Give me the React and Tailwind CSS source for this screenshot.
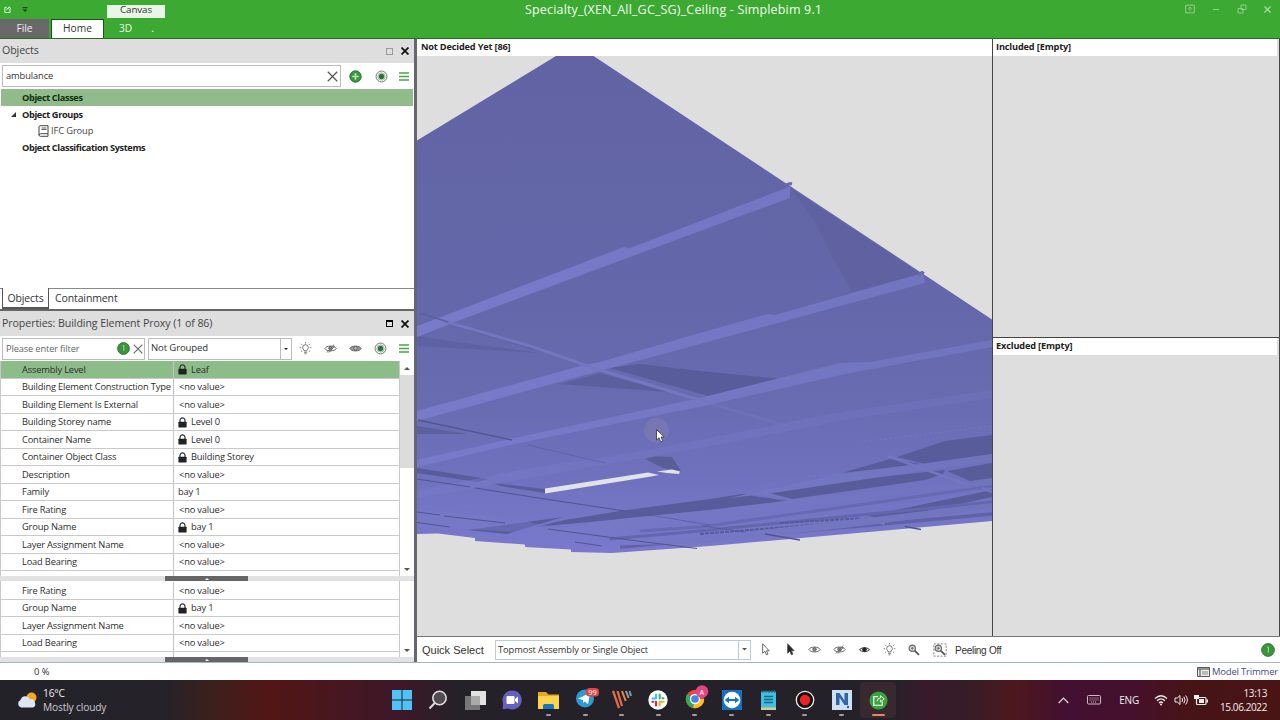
import React from 'react';

const UI = "font-['Open_Sans','Noto_Sans',sans-serif] whitespace-nowrap";

const ROWS = [
  ['Assembly Level', 'Leaf', true],
  ['Building Element Construction Type', '<no value>'],
  ['Building Element Is External', '<no value>'],
  ['Building Storey name', 'Level 0', true],
  ['Container Name', 'Level 0', true],
  ['Container Object Class', 'Building Storey', true],
  ['Description', '<no value>'],
  ['Family', 'bay 1'],
  ['Fire Rating', '<no value>'],
  ['Group Name', 'bay 1', true],
  ['Layer Assignment Name', '<no value>'],
  ['Load Bearing', '<no value>'],
];

function Svg({ s = 16, w, h, vb = '0 0 16 16', className = '', children }) {
  return (
    <svg width={w || s} height={h || s} viewBox={vb} className={'block shrink-0 ' + className} fill="none">
      {children}
    </svg>
  );
}

const Lock = () => (
  <Svg w={9} h={11} vb="0 0 9 11">
    <path d="M2 5V3.4a2.5 2.5 0 0 1 5 0V5" stroke="#333" strokeWidth="1.2" />
    <rect x="0.4" y="4.8" width="8.2" height="5.6" rx="0.4" fill="#222" />
  </Svg>
);
const Target = () => (
  <Svg s={13}>
    <circle cx="8" cy="8" r="6.7" stroke="#6d776d" strokeWidth="1.2" />
    <circle cx="8" cy="8" r="4.6" fill="#d5e3d5" stroke="#8d9a8d" strokeWidth=".7" />
    <circle cx="8" cy="8" r="3.3" fill="#2c7238" />
  </Svg>
);
const Menu = () => (
  <Svg w={10} h={9} vb="0 0 10 9">
    <path d="M0 1h10M0 4.5h10M0 8h10" stroke="#45a945" strokeWidth="1.3" />
  </Svg>
);
const Cross = ({ s = 10, c = '#444', sw = 1.1 }) => (
  <Svg s={s} vb="0 0 10 10">
    <path d="M.7.7l8.6 8.6M9.3.7L.7 9.3" stroke={c} strokeWidth={sw} />
  </Svg>
);
const Info = ({ s = 13 }) => (
  <Svg s={s}>
    <circle cx="8" cy="8" r="7.3" fill="#39943a" stroke="#287128" />
    <path d="M6.8 4.6h1.6v6.2M8.4 4v7" stroke="#9ed69e" strokeWidth="1.3" />
  </Svg>
);
const Bulb = () => (
  <Svg s={13}>
    <path d="M6.3 11V9.8C5 9 4.5 8 4.5 6.8a3.5 3.5 0 0 1 7 0C11.500 8 11 9 9.700 9.800V11z" stroke="#555" />
    <path d="M6.300 12.800h3.400M6.800 14.500h2.400M8 0v1.700M2.400 2.200l1.300 1.300M13.600 2.200l-1.300 1.300M.8 7h1.800M13.400 7h1.800M2.400 12l1.300-1.200M13.600 12l-1.300-1.200" stroke="#666" />
  </Svg>
);
const Eye = ({ slash, solid }) => (
  <Svg s={13}>
    <path d="M1 8c2-4 12-4 14 0-2 4-12 4-14 0z" stroke="#666" strokeWidth="1.2" fill={solid ? '#999' : 'none'} />
    <circle cx="8" cy="7.800" r="2.200" fill={solid ? '#bbb' : '#888'} stroke="#555" />
    {slash && <path d="M3.500 13L12.500 3M6 13l7-8" stroke="#666" strokeWidth="1.1" />}
  </Svg>
);
const SmallEye = () => (
  <Svg s={13}>
    <path d="M2 8c2-3 10-3 12 0-2 3.500-10 3.500-12 0z" stroke="#555" strokeWidth="1.300" />
    <circle cx="8" cy="8" r="2.800" fill="#222" />
  </Svg>
);
const Pointer = ({ fill }) => (
  <Svg s={13}>
    <path d="M4.500 1v11.500l2.800-2.300L9 14.500l2-.8-1.800-4.200h3.300z" fill={fill} stroke="#555" strokeWidth="1.100" />
  </Svg>
);
const Zoomer = ({ boxed }) => (
  <Svg s={14}>
    {boxed && <path d="M1 1h14v14H1z" stroke="#777" strokeDasharray="2.500 1.500" />}
    <circle cx="6" cy="6" r="3.600" stroke="#666" strokeWidth="1.300" fill="#ddd" />
    <path d="M6 4.300v3.400M4.300 6h3.400" stroke="#555" strokeWidth=".9" />
    <path d="M8.700 8.700l5 5" stroke="#555" strokeWidth="2" />
  </Svg>
);
const Tri = ({ up, s = 6, c = '#555' }) => (
  <Svg w={s} h={s / 2} vb="0 0 6 3">
    <path d={up ? 'M0 3L3 0l3 3z' : 'M0 0h6L3 3z'} fill={c} />
  </Svg>
);

function Row({ row, selected }) {
  return (
    <div className={'flex h-[17.53px] shrink-0 border-b border-[#c9c9c9] pt-px text-[9.300px] tracking-[-0.17px] text-[#2d2d2d] ' + (selected ? 'bg-[#8cbd88]' : 'bg-white')}>
      <div className="-mt-px flex w-[174px] shrink-0 items-center border-r border-[#c4c4c4] pl-[22px] pt-px">{row[0]}</div>
      <div className={'flex items-center gap-[4px] ' + (row[2] || row[1] === 'bay 1' ? 'pl-1' : 'pl-[5px]')}>
        {row[2] && <Lock />}
        <span>{row[1]}</span>
      </div>
    </div>
  );
}

function Splitter() {
  return (
    <div className="flex h-[5px] shrink-0 bg-[#e2e2e2] pl-[165px]">
      <div className="flex w-[83px] items-center justify-center bg-[#666]"><Tri up s={4} c="#fff" /></div>
    </div>
  );
}

function PanelTitle({ title, faded, className }) {
  return (
    <div className={'flex shrink-0 items-center bg-[#dedede] pl-0.5 pr-[5px] text-[#444] ' + className}>
      <span className="flex-1 text-[10.600px] tracking-[-0.07px]">{title}</span>
      <div className="flex items-center gap-2">
        <div className={faded ? 'h-[7px] w-[7px] border border-[#999]' : 'h-[7px] w-[7px] border border-t-2 border-black'} />
        <Cross s={8} c="#111" sw={2.2} />
      </div>
    </div>
  );
}

function Left() {
  return (
    <div className="flex w-[414px] shrink-0 flex-col bg-white">
      <PanelTitle title="Objects" faded className="h-6" />
      <div className="flex h-[26px] shrink-0 items-center pl-0.5">
        <div className="flex h-[22px] w-[339px] items-center justify-between border border-[#bbb] pl-[3px] pr-[2px] text-[9.300px] tracking-[-0.1px] text-[#333]">
          <span>ambulance</span>
          <Cross s={11} c="#555" />
        </div>
        <div className="ml-[8px]">
          <Svg s={13}>
            <circle cx="8" cy="8" r="7" fill="#379b3b" stroke="#266e29" strokeWidth="1.200" />
            <path d="M8 4v8M4 8h8" stroke="#b9e4b9" strokeWidth="2" />
          </Svg>
        </div>
        <div className="ml-[13px]"><Target /></div>
        <div className="ml-[11px]"><Menu /></div>
      </div>
      <div className="ml-px mr-px flex h-[17px] shrink-0 items-center bg-[#91bb8b] pl-[21px] pt-px text-[9.200px] font-bold tracking-[-0.37px] text-[#0d2f0d]">Object Classes</div>
      <div className="flex h-[16.5px] shrink-0 items-center pt-px text-[9.200px] font-bold tracking-[-0.37px] text-[#222]">
        <div className="w-[22px] pl-[11px]"><Svg s={5} vb="0 0 5 5"><path d="M5 0v5H0z" fill="#333" /></Svg></div>
        Object Groups
      </div>
      <div className="flex h-[16.5px] shrink-0 items-center gap-[2px] pl-[38px] text-[9.300px] tracking-[-0.1px] text-[#444]">
        <Svg w={11} h={12} vb="0 0 11 12">
          <path d="M2 .7h8v8H2.500A1.500 1.500 0 0 0 1 10M2 .7A1.500 1.500 0 0 0 1 2v8c0 .8.6 1.300 1.400 1.300H10V8.700" stroke="#444" />
          <path d="M3.500 3h5M3.500 4.500h5" stroke="#666" />
        </Svg>
        IFC Group
      </div>
      <div className="flex h-[16.5px] shrink-0 items-center pl-[22px] pt-px text-[9.200px] font-bold tracking-[-0.37px] text-[#222]">Object Classification Systems</div>
      <div className="flex-1" />
      <div className="flex h-[21px] shrink-0 text-[10.500px] tracking-[-0.12px] text-[#333]">
        <div className="w-0.5 border-t border-[#888]" />
        <div className="flex w-[47px] items-center justify-center border-x border-b-2 border-[#555] pt-0.5">Objects</div>
        <div className="flex flex-1 items-center border-t border-[#888] pl-1.5">Containment</div>
      </div>
      <div className="h-0.5 shrink-0 bg-[#666]" />
      <PanelTitle title="Properties: Building Element Proxy (1 of 86)" className="h-[25px]" />
      <div className="flex h-[25px] shrink-0 items-center pl-0.5">
        <div className="flex h-[22px] w-[143px] items-center border border-[#bbb] pl-[3px] pr-px text-[9.300px] tracking-[-0.15px] text-[#666]">
          <span className="flex-1">Please enter filter</span>
          <Info s={13} />
          <div className="ml-[3px]"><Cross s={10} c="#666" /></div>
        </div>
        <div className="ml-[3px] flex h-[22px] w-[144px] border border-[#bbb]">
          <div className="flex flex-1 items-center pl-[2px] text-[9.600px] tracking-[-0.15px] text-[#333]">Not Grouped</div>
          <div className="flex w-[11px] items-center justify-center border-l border-[#bbb]"><Tri s={4} c="#222" /></div>
        </div>
        <div className="ml-[7px] flex w-[110px] shrink-0 items-center justify-between">
          <Bulb /><Eye slash /><Eye solid /><Target /><Menu />
        </div>
      </div>
      <div className="flex h-[215px] shrink-0">
        <div className="w-[400px] overflow-hidden border-l border-r border-[#c9c9c9]">
          <div className="-ml-px flex flex-col">
            {ROWS.map((r, i) => <Row key={i} row={r} selected={i === 0} />)}
            <div className="h-[5px]"><div className="h-full w-[174px] border-r border-[#c4c4c4]" /></div>
          </div>
        </div>
        <div className="flex flex-1 flex-col items-center">
          <div className="flex h-[14px] items-center"><Tri up s={6} /></div>
          <div className="h-[93px] w-full bg-[#dcdcdc]" />
          <div className="flex-1" />
          <div className="flex h-[14px] items-center"><Tri s={6} /></div>
        </div>
      </div>
      <Splitter />
      <div className="flex h-[76px] shrink-0">
        <div className="w-[400px] overflow-hidden border-l border-r border-[#c9c9c9] pt-px">
          <div className="-ml-px flex flex-col">
            {ROWS.slice(8).map((r, i) => <Row key={i} row={r} />)}
            <div className="h-[5px]"><div className="h-full w-[174px] border-r border-[#c4c4c4]" /></div>
          </div>
        </div>
        <div className="flex flex-1 flex-col items-center justify-end">
          <div className="flex h-[14px] items-center"><Tri s={6} /></div>
        </div>
      </div>
      <Splitter />
    </div>
  );
}

function Scene() {
  return (
    <svg width="575" height="580" viewBox="417 56 575 580" className="block" fill="none">
      <defs>
        <linearGradient id="slab" x1="0" y1="56" x2="0" y2="553" gradientUnits="userSpaceOnUse">
          <stop offset="0" stopColor="#6163a4" />
          <stop offset=".5" stopColor="#6467a9" />
          <stop offset=".68" stopColor="#686bb0" />
          <stop offset=".84" stopColor="#6f71bd" />
          <stop offset="1" stopColor="#7a79ce" />
        </linearGradient>
        <linearGradient id="beam" x1="417" y1="0" x2="992" y2="0" gradientUnits="userSpaceOnUse">
          <stop offset="0" stopColor="#7a7acb" />
          <stop offset="1" stopColor="#7074bd" />
        </linearGradient>
      </defs>
      <rect x="417" y="56" width="575" height="580" fill="#dedede" />
      <path d="M417 140.500L556 56h37.500L992 319.500V521L710 546 612 553 571 552V549.500L525 547V544.500L475 541V538L438 533.500 417 534z" fill="url(#slab)" />
      <path d="M791 189L921 274 852 292 833 258 815 222z" fill="#5e60a0" opacity=".85" />
      <g fill="#585c9a">
        <path d="M417 336L455 342 540 353 417 346z" opacity=".55" />
        <path d="M560 384L600 373 668 392z" opacity=".8" />
        <path d="M610 368L640 364 700 371 783 379 712 397z" />
        <path d="M440 322L600 369 585 363z" opacity=".8" />
        <path d="M417 426L468 434H417z" opacity=".8" />
        <path d="M417 468L488 479 478 482 417 473z" />
        <path d="M494 483L545 489V493L500 486z" />
        <path d="M467 530L520 523 563 517 507 534z" />
        <path d="M535 527L565 520 620 511 710 499 742 494 787 501 710 510 600 521z" />
        <path d="M762 492L880 477 945 470 943 474 925 480 785 500z" />
        <path d="M842 473L890 459 920 464z" />
        <path d="M897 457L945 441 992 435V454L925 464z" />
        <path d="M947 471L992 463V478L970 481z" />
        <path d="M867 516L992 490V497L890 519z" />
      </g>
      <g stroke="#5f62a6" strokeWidth="2">
        <path d="M610 539L700 531 840 517 992 502" stroke="#6466ac" strokeWidth="3" />
        <path d="M640 531L700 527 830 509 992 486" stroke="#686ab1" strokeWidth="3" />
        <path d="M620 547L700 540 860 526 992 514" strokeWidth="3.500" />
        <path d="M780 523L867 518M700 534L860 521" stroke="#575a98" strokeDasharray="4 1" />
      </g>
      <g fill="url(#beam)">
        <path d="M441 317L624 247 629 248.500 790 186.500V198L700 231 455 322 417 337V326z" />
        <path d="M417 411L580 366 600 362 700 333 768 314 775 315 923 273 925 283 700 344 585 375 417 421z" />
        <path d="M417 460L515 438 700 398 840 363 870 362 992 340V347L850 373 708 405 510 445 417 467z" />
        <path d="M417 491L530 468 620 455 700 440 830 414 992 390V398L850 419 700 448 550 474 417 498z" opacity=".5" />
        <path d="M835 475L920 464 992 454V461L920 471 780 492 730 498z" />
        <path d="M545 531L620 519 710 510 785 501 992 479V485L850 501 785 508 700 519 590 534z" />
        <path d="M417 510L500 517 600 535 560 534 417 527z" opacity=".45" />
        <path d="M600 546L710 536 850 520 992 503V508L870 525 710 543z" />
      </g>
      <g stroke="#7476bf" strokeWidth="3">
        <path d="M447 322L530 346 600 370 706 402" />
        <path d="M706 402L790 427" opacity=".45" />
        <path d="M888 456L968 485M760 492L795 501M982 488L992 492M860 517L885 524" strokeWidth="2.500" />
      </g>
      <g stroke="#51558f" strokeWidth="1">
        <path d="M420 313L448 322" stroke="#5d609f" strokeWidth="1.500" />
        <path d="M418 420L512 440" strokeWidth="1.300" />
        <path d="M528 445L605 463" opacity=".45" />
        <path d="M417 479L470 487M475 488L545 499 625 511" />
        <path d="M625 511L710 525" opacity=".6" />
        <path d="M417 512L440 515M444 516L505 523M548 529L630 540 697 548.500" />
        <path d="M417 522.500L450 527M575 542L602 546" />
        <path d="M702 526L745 532" opacity=".7" />
        <path d="M765 534L800 540M905 526.500L921 529.500" strokeWidth="1.400" />
        <path d="M784 186l6-2.500 2 .5M918 275l4-2.500 2 1" stroke="#666aac" strokeWidth="3" />
      </g>
      <path d="M860 442L920 435 992 426M760 487L810 476 850 474M440 511L480 505" stroke="#8183ca" strokeDasharray="2 3" opacity=".45" />
      <path d="M645 459L655 456.500 672 457 681 471 663 468z" fill="#595d98" />
      <path d="M545 488.500L648 472.500 659 475 648 477 545 493.500z" fill="#e0e4e6" />
      <path d="M657 471.500L672 469.500 680 471.500 679 474 667 473z" fill="#e0e4e6" />
      <circle cx="656.500" cy="430.500" r="12.500" fill="#8480b0" opacity=".5" />
      <path d="M656.500 429.500V440l2.500-2.200 1.800 4 2-.9-1.800-3.900h3.200z" fill="#fff" stroke="#333" strokeWidth=".8" />
    </svg>
  );
}

function Taskbar() {
  const icons = [
    <Svg s={20} vb="0 0 20 20"><path d="M0 0h9.500v9.500H0zM10.500 0H20v9.500h-9.500zM0 10.500h9.500V20H0zM10.500 10.500H20V20h-9.500z" fill="#4cc4f7" /></Svg>,
    <Svg s={20} vb="0 0 20 20"><circle cx="11.500" cy="8" r="6.700" fill="#514c50" stroke="#ddd" strokeWidth="1.600" /><path d="M6.700 13L1.500 18.500" stroke="#ddd" strokeWidth="2" /></Svg>,
    <Svg s={21} vb="0 0 21 21"><path d="M6 1h15v14H6z" fill="#e2e2e2" /><path d="M0 6h15v14H0z" fill="#777" /><path d="M6 6h9v9H6z" fill="#aaa" /></Svg>,
    <Svg s={20} vb="0 0 20 20"><path d="M10 .5a9.500 9.500 0 1 1-4 18L.7 19.300 1 13A9.500 9.500 0 0 1 10 .5z" fill="#6461c0" /><rect x="4.500" y="6" width="8" height="8" rx="1" fill="#fff" /><path d="M13 9l3-2.500v7L13 11z" fill="#fff" /></Svg>,
    <Svg s={21} vb="0 0 21 21"><path d="M0 2h8l2.500 2.500H21V19H0z" fill="#e6a722" /><path d="M0 6h21v13H0z" fill="#ffd34d" /><path d="M5 19v-3.500q0-1.500 1.500-1.500h8q1.500 0 1.500 1.500V19z" fill="#1679bd" /></Svg>,
    <Svg w={24} h={20} vb="0 0 24 20"><circle cx="10" cy="10.500" r="9" fill="#2c9bd4" /><path d="M3 10.500L15 5l-2 11-3.500-2.600L8 15v-3z" fill="#fff" /><rect x="11" y="0" width="13" height="8.500" rx="3.500" fill="#df4545" /><text x="13.200" y="7.200" fontSize="7.500" fill="#fff" fontFamily="Open Sans">99</text></Svg>,
    <Svg s={20} vb="0 0 20 20"><path d="M1 1l6 17M5.500 1l4.500 15" stroke="#e06c45" strokeWidth="2.300" /><path d="M10 1l3.700 10" stroke="#df8a54" strokeWidth="2" /><path d="M14 1l2.600 7" stroke="#9a9b91" strokeWidth="2" /><path d="M17.500 1l1.500 5" stroke="#6ba3b0" strokeWidth="2" /></Svg>,
    <Svg s={20} vb="0 0 20 20"><circle cx="10" cy="10" r="9.700" fill="#fff" /><g strokeWidth="2.100" strokeLinecap="round"><path d="M8 4.500v4M4.500 8.500H8" stroke="#36c5f0" /><path d="M11.700 4.500v4M15.500 8.300h-1" stroke="#2eb67d" /><path d="M8 11.800v3.700M4.500 11.800h.8" stroke="#e01e5a" /><path d="M11.700 15.500v-3.700h4" stroke="#ecb22e" /></g></Svg>,
    <Svg w={26} h={24} vb="0 0 26 24"><circle cx="11" cy="14" r="9.200" fill="#e8463b" /><path d="M11 14L3.200 9a9.200 9.200 0 0 0 6 14z" fill="#3aa757" /><path d="M11 14h9.200a9.200 9.200 0 0 1-11 9z" fill="#fbc116" /><circle cx="11" cy="14" r="4.500" fill="#4285f4" stroke="#fff" strokeWidth="1.300" /><circle cx="18" cy="6.500" r="6.300" fill="#e54484" /><text x="15.500" y="9.500" fontSize="7.500" fill="#fff" fontFamily="Open Sans">A</text></Svg>,
    <Svg s={20} vb="0 0 20 20"><path d="M0 0h20v20H0z" fill="#1671c1" /><circle cx="10" cy="10" r="8.300" fill="#fff" /><path d="M2.700 10L7 6.800v2.200h6V6.800l4.300 3.200-4.300 3.200V11H7v2.200z" fill="#1671c1" /></Svg>,
    <Svg w={15} h={20} vb="0 0 15 20"><rect y="1.500" width="15" height="18.500" rx="1" fill="#41bfdf" /><path d="M2 0v3M5 0v3M8 0v3M11 0v3M13.500 0v3" stroke="#27657b" /><path d="M3 6.500h9M3 9.500h9M3 12.500h9" stroke="#15678a" strokeWidth="1.300" /><path d="M0 17.500h15V20H0z" fill="#dbc893" /></Svg>,
    <Svg s={20} vb="0 0 20 20"><circle cx="10" cy="10" r="8.700" fill="#111" stroke="#eee" strokeWidth="1.300" /><circle cx="10" cy="10" r="5.200" fill="#ee2222" /></Svg>,
    <Svg s={20} vb="0 0 20 20"><path d="M0 0h20v20H0z" fill="#cfe0f3" /><path d="M4 15V3h3.500l5 7.500V3H16v12h-3.500l-5-7.500V15z" fill="#2f65a5" /><circle cx="16" cy="17" r="1.200" fill="#2f65a5" /></Svg>,
    <Svg s={19} vb="0 0 20 20"><circle cx="10" cy="10" r="9.500" fill="#36a33b" /><path d="M9.500 6H5v9h9v-4" stroke="#fff" strokeWidth="1.300" /><path d="M8.500 11q.3-3.500 3.500-3.700V5l4 3.300-4 3.200V9.300" stroke="#fff" /></Svg>,
  ];
  return (
    <div className="flex h-10 shrink-0 items-center bg-[linear-gradient(90deg,#232229_0px,#25222a_165px,#3b201c_210px,#521514_270px,#451723_350px,#3b1828_405px,#252128_455px,#242128_890px,#371a2c_925px,#351d27_965px,#4d181d_1015px,#421031_1065px,#45102d_1130px,#471416_1190px,#481414_1280px)] text-[#f1eef0]">
      <div className="flex w-[383.500px] items-center gap-[6px] pl-[17px]">
        <Svg w={20} h={17} vb="0 0 20 17">
          <circle cx="14.500" cy="5.500" r="5" fill="#f5a623" />
          <path d="M4 15.500a4 4 0 0 1-.5-7.500A5 5 0 0 1 13 7.500a3.500 3.500 0 0 1 5 3.500 3.500 3.500 0 0 1-2 4.500z" fill="#dbe5f3" />
        </Svg>
        <div className="pt-px text-[10.200px] leading-[13.500px] tracking-[-0.15px]">
          <div>16°C</div>
          <div className="text-[#cfcbd0]">Mostly cloudy</div>
        </div>
      </div>
      {icons.map((ic, i) => (
        <div key={i} className={'relative flex h-9 w-[36.650px] shrink-0 items-center justify-center rounded ' + (i === 13 ? 'bg-[#38292f]' : '')}>
          <div className={i === 5 ? '-mt-1 ml-1' : i === 8 ? '-mt-1.5 ml-1' : ''}>{ic}</div>
          {i > 3 && <div className={'absolute bottom-0.5 h-0.5 rounded-full ' + (i === 13 ? 'w-[13px] bg-[#ee7d75]' : 'w-[5px] bg-[#a19da1]')} />}
        </div>
      ))}
      <div className="flex flex-1 items-center pr-[13px]">
        <div className="flex-1" />
        <Svg w={11} h={7} vb="0 0 11 7"><path d="M.7 6L5.500 1.200 10.300 6" stroke="#ddd" strokeWidth="1.200" /></Svg>
        <Svg w={14} h={10} vb="0 0 14 10" className="ml-[18px]"><rect x=".5" y=".5" width="13" height="8.500" rx="1" stroke="#cbb9c4" /><path d="M2.500 3h9M2.500 5h9M4 7h6" stroke="#cbb9c4" strokeDasharray="1 1" /></Svg>
        <span className="ml-[18px] pt-px text-[10px] tracking-[-0.2px]">ENG</span>
        <Svg w={14} h={12} vb="0 0 14 12" className="ml-[15px]"><path d="M1 4.500q6-5.500 12 0M3 6.800q4-3.800 8 0M5 9q2-2 4 0" stroke="#eee" strokeWidth="1.200" /><circle cx="7" cy="10.500" r="1" fill="#eee" /></Svg>
        <Svg w={14} h={12} vb="0 0 14 12" className="ml-[6px]"><path d="M1 4h2.300L6 1.500v9L3.300 8H1z" stroke="#eee" /><path d="M8 4q1.300 2 0 4M9.800 2.700q2.400 3.300 0 6.600M11.700 1.500q3.300 4.500 0 9" stroke="#eee" /></Svg>
        <Svg w={14} h={11} vb="0 0 14 11" className="ml-[6px]"><rect x="2.500" y="2.500" width="9.500" height="7" rx="1" stroke="#eee" strokeWidth="1.200" /><path d="M5 4h5v4H5zM0 0h5v4H0zM12.500 4.500H14v3h-1.500z" fill="#eee" /></Svg>
        <div className="ml-[12px] pt-px text-right text-[10px] leading-[13.500px] tracking-[-0.4px]"><div>13:13</div><div>15.06.2022</div></div>
      </div>
    </div>
  );
}

export default function App() {
  return (
    <div className={'flex h-[720px] w-[1280px] flex-col overflow-hidden bg-white ' + UI}>
      <div className="flex h-[38px] shrink-0 bg-[#3ca933] text-white">
        <div className="flex w-[417px] shrink-0 flex-col">
          <div className="flex h-[19px]">
            <div className="flex w-[107px] items-center gap-[11px] pl-1">
              <Svg s={7} vb="0 0 8 8"><path d="M3 1.500H1v6h6V5M3 4.500Q3 2.500 5.500 2.500V1L8 3 5.500 5" stroke="#e0ffe0" strokeWidth="1.100" /></Svg>
              <Svg w={6} h={6} vb="0 0 6 6"><path d="M.5.7h5" stroke="#133a13" /><path d="M.5 2.500h5L3 5z" fill="#133a13" /></Svg>
            </div>
            <div className="mt-[5px] flex h-[13px] w-[58px] items-center justify-center bg-[#e8f6e7] pb-[9px] text-[9.800px] leading-none tracking-[-0.1px] text-[#333]"><span className="mt-[5px]">Canvas</span></div>
          </div>
          <div className="flex h-[19px] items-stretch text-[10.200px]">
            <div className="flex w-[49px] items-center justify-center bg-[#696969] pt-px text-[#eee]">File</div>
            <div className="ml-[2px] flex w-[53px] items-center justify-center border border-b-0 border-[#175217] bg-white text-[#333]">Home</div>
            <div className="flex items-center pl-[15px] pt-px text-[#eaffea]">3D</div>
            <div className="flex items-center pl-[19px] pt-px">.</div>
          </div>
        </div>
        <div className="flex flex-1 items-start">
          <div className="w-[513px] shrink-0 pl-[108px] text-[12.500px] leading-[19px] tracking-[0.17px] text-[#f0fff0]">Specialty_(XEN_All_GC_SG)_Ceiling - Simplebim 9.1</div>
          <div className="flex flex-1 items-center justify-between pl-[255px] pr-[9px] pt-[4px]">
            <Svg w={10} h={10} vb="0 0 10 10"><path d="M.7 1.200h8.600v7.600H.7zM5 3v4M3.500 4.700L5 3l1.500 1.700" stroke="#93cb8e" /></Svg>
            <Svg w={8} h={8} vb="0 0 8 8"><path d="M1 4.500h6" stroke="#93cb8e" /></Svg>
            <Svg w={10} h={10} vb="0 0 10 10"><path d="M4 1h5v4.500H4zM1 4.500h5V9H1z" stroke="#93cb8e" /></Svg>
            <Cross s={7} c="#a5d8a0" sw={2} />
          </div>
        </div>
      </div>
      <div className="flex h-[624px] shrink-0 border-t border-[#276b27]">
        <Left />
        <div className="w-[3px] shrink-0 bg-[#666670]" />
        <div className="flex flex-1 flex-col">
          <div className="flex h-[598px] shrink-0 border-b border-[#777]">
            <div className="flex w-[575px] shrink-0 flex-col">
              <div className="flex h-[17px] shrink-0 items-center pb-0.5 pl-1 text-[9.200px] font-bold tracking-[-0.17px] text-[#222]">Not Decided Yet [86]</div>
              <Scene />
            </div>
            <div className="flex flex-1 flex-col border-l border-r border-[#444] bg-[#dedede]">
              <div className="mr-0.5 flex h-[17px] shrink-0 items-center bg-white pb-0.5 pl-[3px] text-[9.200px] font-bold tracking-[-0.15px] text-[#222]">Included [Empty]</div>
              <div className="h-[281px] shrink-0" />
              <div className="h-px shrink-0 bg-[#444]" />
              <div className="mr-0.5 flex h-[17px] shrink-0 items-center bg-white pb-0.5 pl-[3px] text-[9.200px] font-bold tracking-[-0.15px] text-[#222]">Excluded [Empty]</div>
            </div>
          </div>
          <div className="flex flex-1 items-center bg-white pl-[5px] pr-[5px]">
            <span className="w-[73px] pt-0.5 font-['Liberation_Sans',sans-serif] text-[11px] text-[#333]">Quick Select</span>
            <div className="flex h-[20px] w-[256px] border border-[#bccad2]">
              <div className="flex flex-1 items-center pl-[2px] pt-px text-[9.300px] tracking-[-0.08px] text-[#333]">Topmost Assembly or Single Object</div>
              <div className="flex w-[12px] items-center justify-center border-l border-[#bccad2]"><Tri s={5} /></div>
            </div>
            <div className="ml-[8px] flex w-[188px] items-center justify-between">
              <Pointer fill="#fff" /><Pointer fill="#222" /><Eye /><Eye slash /><SmallEye /><Bulb /><Zoomer /><Zoomer boxed />
            </div>
            <span className="ml-[8px] flex-1 pt-px font-['Liberation_Sans',sans-serif] text-[10px] tracking-[-0.28px] text-[#333]">Peeling Off</span>
            <Info s={14} />
          </div>
        </div>
      </div>
      <div className="flex h-[18px] shrink-0 items-center justify-between border-t border-[#a8b5bd] bg-white pl-[34px] pr-[2px] pt-px text-[9.400px] text-[#333]">
        <span>0 %</span>
        <div className="flex items-center gap-[2px] text-[#454c80]">
          <Svg w={13} h={10} vb="0 0 13 10"><path d="M.5.5h12v9H.5z" fill="#eee" stroke="#555" /><path d="M1 2h11M3 2v7" stroke="#777" strokeWidth="1.500" /><path d="M5 4h6v4H5z" fill="#bbb" /></Svg>
          <span className="text-[9.500px] tracking-[-0.2px]">Model Trimmer</span>
        </div>
      </div>
      <Taskbar />
    </div>
  );
}
